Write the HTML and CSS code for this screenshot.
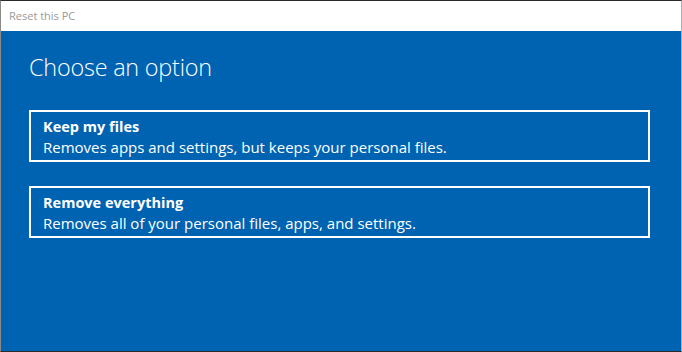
FILE: index.html
```html
<!DOCTYPE html>
<html lang="en">
<head>
<meta charset="utf-8">
<title>Reset this PC</title>
<link rel="stylesheet" href="styles.css">
</head>
<body>
<div class="window">
  <div class="titlebar">Reset this PC</div>
  <div class="content">
    <h1 class="heading">Choose an option</h1>
    <div class="options">
      <div class="option">
        <div class="option-title">Keep my files</div>
        <div class="option-desc">Removes apps and settings, but keeps your personal files.</div>
      </div>
      <div class="option">
        <div class="option-title">Remove everything</div>
        <div class="option-desc">Removes all of your personal files, apps, and settings.</div>
      </div>
    </div>
  </div>
</div>
</body>
</html>
```

FILE: styles.css
```css
html, body {
  margin: 0;
  padding: 0;
  width: 682px;
  height: 352px;
  overflow: hidden;
  background: #2b2b2b;
}

.window {
  box-sizing: border-box;
  width: 682px;
  height: 352px;
  border-top: 1px solid #2b2b2b;
  border-bottom: 1px solid #2b2b2b;
  border-left: 1px solid #8a8a8a;
  border-right: 1px solid #a9b1b8;
  display: flex;
  flex-direction: column;
  font-family: "Open Sans", "Noto Sans", sans-serif;
}

.titlebar {
  height: 30px;
  background: #ffffff;
  color: #9a9a9a;
  font-size: 11px;
  line-height: 30px;
  padding-left: 8px;
  flex: none;
}

.content {
  flex: 1;
  background: #0063b1;
  padding: 20px 31px 0 28px;
  color: #ffffff;
}

.heading {
  margin: 0;
  font-weight: 300;
  font-size: 23.4px;
  line-height: 32px;
  letter-spacing: -0.2px;
}

.options {
  margin-top: 27px;
  display: flex;
  flex-direction: column;
  gap: 24px;
}

.option {
  border: 2px solid #ffffff;
  padding: 5px 12px 3px 12px;
  height: 52px;
  box-sizing: border-box;
}

.option-title {
  font-weight: 700;
  font-size: 14.5px;
  line-height: 20px;
}

.option-desc {
  font-size: 15px;
  line-height: 20px;
}
```
